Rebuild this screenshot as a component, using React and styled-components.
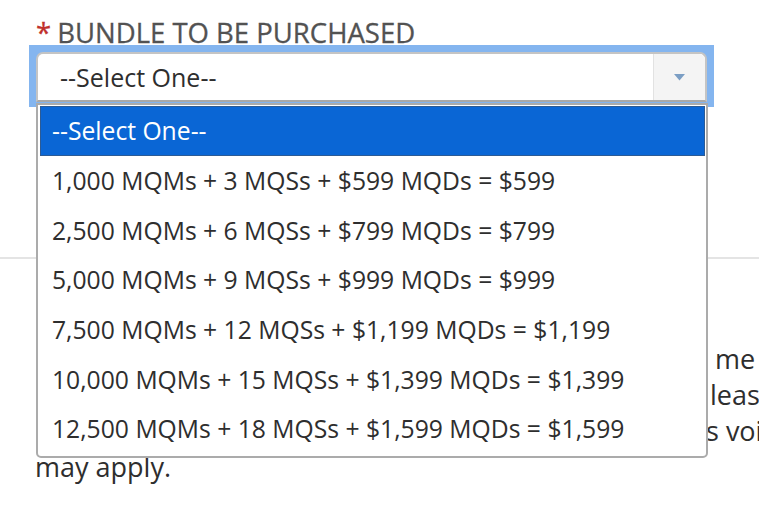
import React from "react";
import styled, { createGlobalStyle } from "styled-components";

const Global = createGlobalStyle`
  html, body { margin: 0; padding: 0; background: #fff; overflow: hidden; }
  body { font-family: "Open Sans", "Noto Sans", sans-serif; }
  * { box-sizing: border-box; }
`;

const Page = styled.div`
  position: relative;
  width: 759px;
  height: 520px;
  overflow: hidden;
`;

const Field = styled.div`
  position: relative;
  padding: 17px 0 0 36px;
`;

const Label = styled.div`
  font-size: 27.5px;
  line-height: 32px;
  color: #525252;
  height: 28px;
  white-space: nowrap;
  -webkit-text-stroke: 0.3px #525252;
`;

const Star = styled.span`
  color: #c0302b;
  -webkit-text-stroke: 0.3px #c0302b;
  margin-right: 6px;
`;

const Focus = styled.div`
  margin-left: -7px;
  width: 685px;
  padding: 7px 7px 5px 7px;
  background: #84b5ef;
`;

const SelectBox = styled.div`
  display: flex;
  height: 50px;
  background: #fff;
  border: 2px solid #c4c4c4;
  border-bottom-color: #a9a9a9;
  border-radius: 7px 7px 0 0;
`;

const Value = styled.div`
  flex: 1;
  display: flex;
  align-items: center;
  padding-left: 22px;
  font-size: 25px;
  color: #2e2e2e;
`;

const ArrowCell = styled.div`
  width: 52px;
  display: flex;
  align-items: center;
  justify-content: center;
  background: #f4f4f4;
  border-left: 1px solid #e2e2e2;
  border-top-right-radius: 6px;
`;

const Menu = styled.div`
  position: absolute;
  left: 36px;
  top: 103px;
  width: 672px;
  padding: 1px 1px 2px 2px;
  background: #fff;
  border: 2px solid #ababab;
  border-radius: 0 0 5px 5px;
  z-index: 2;
`;

const Option = styled.div`
  height: 49.7px;
  display: flex;
  align-items: center;
  padding-left: ${(p) => (p.$active ? "11px" : "12px")};
  font-size: 24.7px;
  color: ${(p) => (p.$active ? "#fff" : "#2e2e2e")};
  background: ${(p) => (p.$active ? "#0a66d5" : "#fff")};
  border: ${(p) => (p.$active ? "1px solid #2d5b94" : "none")};
  white-space: nowrap;
`;

const Rule = styled.div`
  margin-top: 150px;
  height: 2px;
  background: #e4e4e4;
`;

const Para = styled.div`
  padding: 82px 0 0 35px;
  font-size: 27px;
  line-height: 36px;
  color: #2e2e2e;
`;

const Line = styled.div`
  display: grid;
  grid-template-columns: ${(p) => p.$lead}px max-content;
  white-space: nowrap;
`;

const Hidden = styled.span`
  display: block;
  overflow: hidden;
  margin-right: 14px;
`;

const lines = [
  ["MQMs, MQSs and MQDs in a bundle are all credited at the same ti", "me", 680],
  ["Bundles are non-refundable and cannot be transferred. P", "lease note", 675],
  ["Bundle pricing is subject to change at any time. Offer i", "s void where prohibited. Restrictions", 671],
];

const options = [
  "--Select One--",
  "1,000 MQMs + 3 MQSs + $599 MQDs = $599",
  "2,500 MQMs + 6 MQSs + $799 MQDs = $799",
  "5,000 MQMs + 9 MQSs + $999 MQDs = $999",
  "7,500 MQMs + 12 MQSs + $1,199 MQDs = $1,199",
  "10,000 MQMs + 15 MQSs + $1,399 MQDs = $1,399",
  "12,500 MQMs + 18 MQSs + $1,599 MQDs = $1,599",
];

export default function App() {
  return (
    <Page>
      <Global />
      <Field>
        <Label>
          <Star>*</Star>BUNDLE TO BE PURCHASED
        </Label>
        <Focus>
          <SelectBox>
            <Value>--Select One--</Value>
            <ArrowCell>
              <svg width="11" height="7" viewBox="0 0 11 7">
                <path d="M0 0 L11 0 L5.5 6.5 Z" fill="#7b9ec4" />
              </svg>
            </ArrowCell>
          </SelectBox>
        </Focus>
        <Menu>
          {options.map((o, i) => (
            <Option key={o} $active={i === 0}>
              {o}
            </Option>
          ))}
        </Menu>
      </Field>
      <Rule />
      <Para>
        {lines.map(([a, b, lead]) => (
          <Line key={a} $lead={lead}>
            <Hidden>{a}</Hidden>
            <span>{b}</span>
          </Line>
        ))}
        <div>may apply.</div>
      </Para>
    </Page>
  );
}
